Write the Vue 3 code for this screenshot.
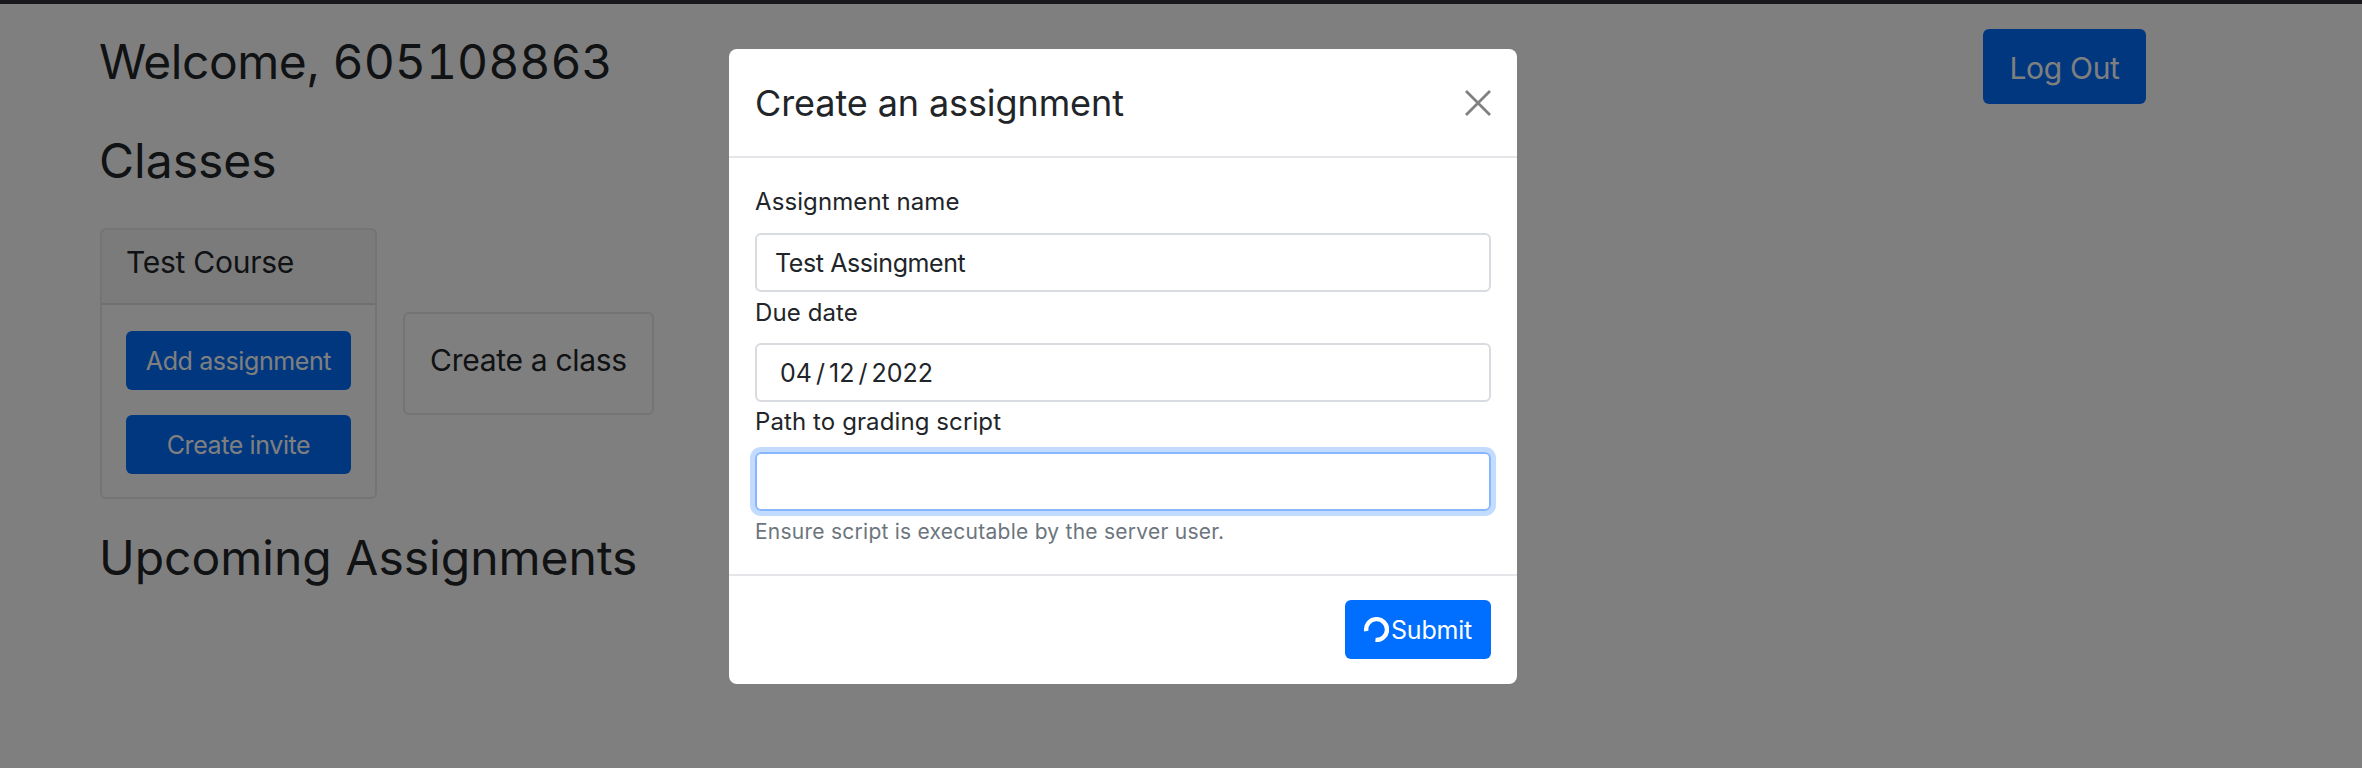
<template>
  <div class="page">
    <div class="topline"></div>
    <div class="container">
      <div class="head">
        <h2 class="welcome">Welcome, <span class="digits">605108863</span></h2>
        <button class="btn logout">Log Out</button>
      </div>
      <h2 class="classes">Classes</h2>
      <div class="cards">
        <div class="card course">
          <div class="card-head">Test Course</div>
          <div class="card-body">
            <button class="btn small">Add assignment</button>
            <button class="btn small">Create invite</button>
          </div>
        </div>
        <div class="card create">Create a class</div>
      </div>
      <h2 class="upcoming">Upcoming Assignments</h2>
    </div>
    <div class="backdrop"></div>
    <div class="modal">
      <div class="modal-head">
        <span class="title">Create an assignment</span>
        <svg class="close" width="26" height="26" viewBox="0 0 26 26"><path d="M1 1 L25 25 M25 1 L1 25" stroke="#808080" stroke-width="2.8" fill="none"/></svg>
      </div>
      <div class="modal-body">
        <label>Assignment name</label>
        <div class="input">Test Assingment</div>
        <label class="l2">Due date</label>
        <div class="input date">04 / 12 / 2022</div>
        <label class="l2 path">Path to grading script</label>
        <div class="input focus"></div>
        <div class="hint">Ensure script is executable by the server user.</div>
      </div>
      <div class="modal-foot">
        <button class="btn submit">
          <svg class="spin" width="25" height="25" viewBox="0 0 24 24"><path d="M2.2 13.5 A10 10 0 1 1 11 22" stroke="#fff" stroke-width="4.2" fill="none"/></svg>Submit
        </button>
      </div>
    </div>
  </div>
</template>

<script setup>
</script>

<style>
html, body { margin: 0; background: #fff; }
</style>

<style scoped>
.page { position: relative; width: 2362px; height: 768px; overflow: hidden; font-family: Inter, "Liberation Sans", sans-serif; color: #212529; background: #fff; }
.topline { position: relative; z-index: 1; height: 4px; background: #19191d; }
.container { padding: 0 100px; }
.head { display: flex; justify-content: space-between; align-items: flex-start; width: 2046px; padding-top: 25px; }
h2 { margin: 0 0 0 -1px; font-weight: 400; font-size: 48px; line-height: 58px; }
.welcome { margin-top: 4px; letter-spacing: -.5px; }
.digits { font-variant-numeric: tabular-nums; letter-spacing: 0; }
.btn { border: 0; background: #006eff; color: #fff; border-radius: 6px; font-family: inherit; padding: 0; }
.logout { width: 163px; height: 75px; padding-top: 2px; font-size: 30px; letter-spacing: -.3px; }
.classes { margin-top: 28px; }
.cards { display: flex; align-items: center; gap: 26px; margin-top: 38px; }
.card { border: 2px solid rgba(0,0,0,.09); border-radius: 6px; box-sizing: border-box; }
.course { width: 277px; height: 271px; }
.card-head { height: 75px; box-sizing: border-box; padding: 0 24px 10px; display: flex; align-items: center; font-size: 30px; letter-spacing: -.25px; background: rgba(0,0,0,.03); border-bottom: 2px solid rgba(0,0,0,.09); }
.card-body { padding: 26px 24px 0; display: flex; flex-direction: column; gap: 25px; }
.small { height: 59px; width: 225px; font-size: 25px; letter-spacing: -.4px; }
.create { width: 251px; height: 103px; padding-bottom: 8px; display: flex; align-items: center; justify-content: center; font-size: 30px; letter-spacing: -.3px; }
.upcoming { margin-top: 30px; }
.backdrop { position: absolute; inset: 0; background: rgba(0,0,0,.5); }
.modal { position: absolute; left: 729px; top: 49px; width: 788px; height: 635px; background: #fff; border-radius: 8px; box-sizing: border-box; }
.modal-head { height: 109px; box-sizing: border-box; padding: 0 26px; border-bottom: 2px solid #e4e6ea; display: flex; justify-content: space-between; align-items: center; }
.title { font-size: 36px; letter-spacing: -.1px; }
.modal-body { padding: 26px 26px 0; box-sizing: border-box; height: 418px; border-bottom: 2px solid #e4e6ea; }
label { display: block; font-size: 24px; line-height: 36px; letter-spacing: .1px; }
.input { margin-top: 12px; height: 59px; box-sizing: border-box; border: 2px solid #d8dbdf; border-radius: 6px; font-size: 25px; letter-spacing: -.4px; display: flex; align-items: center; padding: 0 18px; }
label:first-child + .input { margin-top: 13px; }
.l2 { margin-top: 3px; }
.path { margin-top: 2px; }
.date { padding-left: 23px; word-spacing: -3px; letter-spacing: 0; }
.focus { border-color: #86b7fe; box-shadow: 0 0 0 5px rgba(13,110,253,.25); margin-top: 12px; }
.hint { font-size: 21px; letter-spacing: .25px; color: #6c757d; margin-top: 8px; }
.modal-foot { padding: 24px 26px; display: flex; justify-content: flex-end; }
.submit { width: 146px; height: 59px; font-size: 25px; letter-spacing: -.2px; display: flex; align-items: center; justify-content: center; }
.spin { margin-right: 2px; }
</style>
